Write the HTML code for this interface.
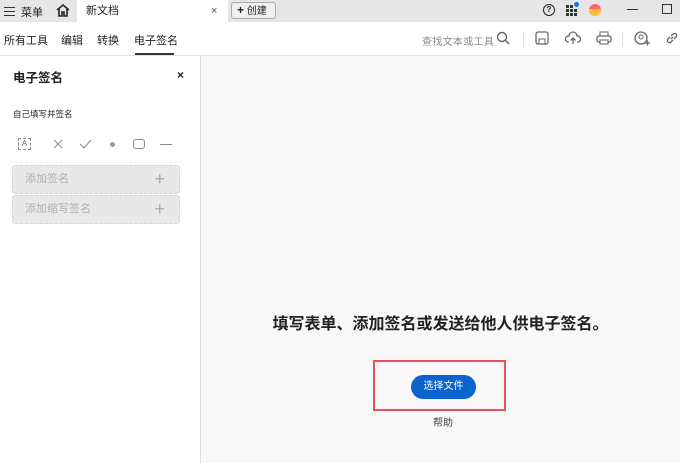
<!DOCTYPE html>
<html><head><meta charset="utf-8"><style>
*{margin:0;padding:0;box-sizing:border-box}
body{width:680px;height:463px;overflow:hidden;font-family:"Liberation Sans","Noto Sans CJK SC",sans-serif;background:#f8f8f8;position:relative;color:#222}
.abs{position:absolute}
.tb{left:0;top:0;width:680px;height:22px;background:#e6e6e6}
.tab{left:77px;top:0;width:151px;height:22px;background:#fff;font-size:11px;line-height:22px;padding-left:9px}
.tool{left:0;top:22px;width:680px;height:34px;background:#fff;border-bottom:1px solid #e2e2e2}
.side{left:0;top:56px;width:201px;height:407px;background:#fff;border-right:1px solid #ddd}
.t{font-size:11px;white-space:nowrap}
.box{left:12px;width:168px;height:29px;background:#e8e8e8;border:1px dashed #d4d4d4;border-radius:3px;font-size:11px;color:#b0b0b0;line-height:27px;padding-left:12px}
.box span{position:absolute;right:14px;top:0;font-size:18px;color:#aaa}
</style></head><body>
<div class="abs tb"></div>
<div class="abs" style="left:4px;top:7px;width:11px;height:9px;border-top:1.3px solid #333;border-bottom:1.3px solid #333"></div>
<div class="abs" style="left:4px;top:11px;width:11px;height:1.3px;background:#333"></div>
<div class="abs t" style="left:21px;top:4px">菜单</div>
<svg class="abs" style="left:55px;top:3px" width="16" height="15" viewBox="0 0 16 15"><path d="M2 7L8 2L14 7M4 6V13H7V9H9V13H12V6" fill="none" stroke="#222" stroke-width="1.6"/></svg>
<div class="abs tab">新文档<span style="position:absolute;left:134px;color:#555">×</span></div>
<div class="abs t" style="left:231px;top:2px;width:45px;height:17px;border:1px solid #aaa;border-radius:3px;background:#f0f0f0;line-height:15px;padding-left:5px;font-size:10px"><b style="font-size:12px">+</b> 创建</div>
<div class="abs" style="left:543px;top:4px;width:12px;height:12px;border:1.5px solid #222;border-radius:50%;font-size:8px;text-align:center;line-height:9px;font-weight:bold">?</div>
<svg class="abs" style="left:566px;top:4px" width="12" height="12"><g fill="#333"><rect x="0" y="1" width="3" height="3"/><rect x="4" y="1" width="3" height="3"/><rect x="0" y="5" width="3" height="3"/><rect x="4" y="5" width="3" height="3"/><rect x="8" y="5" width="3" height="3"/><rect x="0" y="9" width="3" height="3"/><rect x="4" y="9" width="3" height="3"/><rect x="8" y="9" width="3" height="3"/></g></svg>
<div class="abs" style="left:574px;top:2px;width:5px;height:5px;border-radius:50%;background:#1a73e8"></div>
<div class="abs" style="left:589px;top:4px;width:12px;height:12px;border-radius:50%;background:linear-gradient(#f66 0 40%,#fb3 40%)"></div>
<div class="abs" style="left:627px;top:9px;width:11px;height:1px;background:#333"></div>
<div class="abs" style="left:662px;top:4px;width:10px;height:10px;border:1.3px solid #333"></div>
<div class="abs tool"></div>
<div class="abs t" style="left:4px;top:32px">所有工具</div>
<div class="abs t" style="left:61px;top:32px">编辑</div>
<div class="abs t" style="left:97px;top:32px">转换</div>
<div class="abs t" style="left:134px;top:32px">电子签名</div>
<div class="abs" style="left:135px;top:53px;width:39px;height:2px;background:#333"></div>
<div class="abs t" style="left:422px;top:33px;color:#888;font-size:10px;letter-spacing:0.3px">查找文本或工具</div>
<svg class="abs" style="left:496px;top:31px" width="14" height="14"><circle cx="6" cy="6" r="4.5" fill="none" stroke="#666" stroke-width="1.4"/><path d="M9.5 9.5L13 13" stroke="#666" stroke-width="1.4"/></svg>
<div class="abs" style="left:523px;top:32px;width:1px;height:14px;background:#ddd"></div>
<svg class="abs" style="left:535px;top:31px" width="14" height="14"><rect x="1" y="1" width="12" height="12" rx="2" fill="none" stroke="#666" stroke-width="1.3"/><rect x="4" y="8" width="6" height="5" fill="none" stroke="#666"/></svg>
<svg class="abs" style="left:565px;top:31px" width="16" height="14"><path d="M4 11H3A3 3 0 0 1 4 5A4 4 0 0 1 12 5A3 3 0 0 1 13 11H12M8 13V7M5.5 9.5L8 7L10.5 9.5" fill="none" stroke="#666" stroke-width="1.3"/></svg>
<svg class="abs" style="left:596px;top:31px" width="16" height="14"><rect x="1" y="5" width="14" height="6" rx="2" fill="none" stroke="#666" stroke-width="1.3"/><rect x="4" y="1" width="8" height="4" fill="none" stroke="#666"/><rect x="4" y="9" width="8" height="4" fill="#fff" stroke="#666"/></svg>
<div class="abs" style="left:622px;top:32px;width:1px;height:14px;background:#ddd"></div>
<svg class="abs" style="left:634px;top:31px" width="16" height="16"><circle cx="7" cy="7" r="6" fill="none" stroke="#666" stroke-width="1.3"/><circle cx="7" cy="6" r="2" fill="none" stroke="#666"/><path d="M11 12H16M13.5 9.5V14.5" stroke="#666" stroke-width="1.3"/></svg>
<svg class="abs" style="left:665px;top:31px" width="14" height="14"><path d="M6 8L8 6M5 6L3 8A2 2 0 0 0 6 11L8 9M9 8L11 6A2 2 0 0 0 8 3L6 5" fill="none" stroke="#666" stroke-width="1.3"/></svg>
<div class="abs side"></div>
<div class="abs" style="left:13px;top:67px;font-size:12.5px;font-weight:bold">电子签名</div>
<div class="abs" style="left:177px;top:68px;font-size:12px;font-weight:bold">×</div>
<div class="abs" style="left:13px;top:108px;font-size:8.5px">自己填写并签名</div>
<div class="abs" style="left:18px;top:138px;width:13px;height:12px;border:1px dashed #888;font-size:8px;text-align:center;line-height:10px;color:#666">A</div>
<svg class="abs" style="left:53px;top:139px" width="10" height="10"><path d="M1 1L9 9M9 1L1 9" stroke="#888" stroke-width="1"/></svg>
<svg class="abs" style="left:79px;top:139px" width="13" height="10"><path d="M1 5L5 9L12 1" fill="none" stroke="#888" stroke-width="1"/></svg>
<div class="abs" style="left:110px;top:142px;width:5px;height:5px;border-radius:50%;background:#999"></div>
<div class="abs" style="left:133px;top:139px;width:12px;height:10px;border:1.2px solid #888;border-radius:3px"></div>
<div class="abs" style="left:160px;top:144px;width:12px;height:1px;background:#888"></div>
<div class="abs box" style="top:165px">添加签名<span>+</span></div>
<div class="abs box" style="top:195px">添加缩写签名<span>+</span></div>
<div class="abs" style="left:201px;top:310px;width:479px;text-align:center;font-size:16px;font-weight:bold">填写表单、添加签名或发送给他人供电子签名。</div>
<div class="abs" style="left:373px;top:360px;width:133px;height:51px;border:2px solid #e8505b"></div>
<div class="abs" style="left:411px;top:375px;width:65px;height:24px;border-radius:12px;background:#0b63ce;color:#fff;font-size:10px;text-align:center;line-height:24px">选择文件</div>
<div class="abs" style="left:433px;top:414px;font-size:10px;color:#444">帮助</div>
</body></html>
